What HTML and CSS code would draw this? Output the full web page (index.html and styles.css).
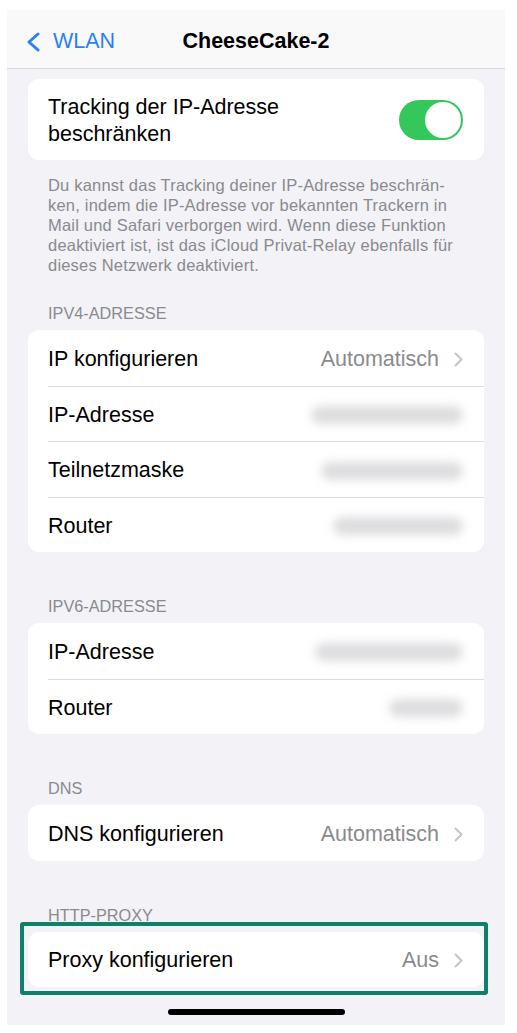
FILE: index.html
```html
<!DOCTYPE html>
<html lang="de">
<head>
    <meta charset="UTF-8">
    <meta name="viewport" content="width=device-width, initial-scale=1.0">
    <title>CheeseCake-2</title>
    <link rel="stylesheet" href="styles.css">
</head>
<body>
    <div class="screen">
        <header class="navbar">
            <a class="back" href="#">
                <svg class="back-icon" width="16" height="20" viewBox="0 0 16 20">
                    <path d="M13 2 L4 10 L13 18" fill="none" stroke="currentColor" stroke-width="3" stroke-linecap="round" stroke-linejoin="round"/>
                </svg>
                WLAN
            </a>
            <h1 class="title">CheeseCake-2</h1>
            <span></span>
        </header>

        <main class="content">
            <section class="group top">
                <div class="card">
                    <div class="row toggle-row">
                        <span class="label">Tracking der IP-Adresse<br>beschränken</span>
                        <span class="switch on"><span class="knob"></span></span>
                    </div>
                </div>
                <p class="footer">Du kannst das Tracking deiner IP-Adresse beschrän&shy;ken, indem die IP-Adresse vor bekannten Trackern in Mail und Safari verborgen wird. Wenn diese Funktion deaktiviert ist, ist das iCloud Privat-Relay ebenfalls für dieses Netzwerk deaktiviert.</p>
            </section>

            <section class="group after-footer">
                <h2 class="group-title">IPv4-Adresse</h2>
                <div class="card">
                    <div class="row">
                        <span class="label">IP konfigurieren</span>
                        <span class="value">Automatisch</span>
                        <svg class="chevron" width="9" height="15" viewBox="0 0 9 15"><path d="M1.5 1.5 L7.5 7.5 L1.5 13.5" fill="none" stroke="currentColor" stroke-width="2" stroke-linecap="round" stroke-linejoin="round"/></svg>
                    </div>
                    <div class="row">
                        <span class="label">IP-Adresse</span>
                        <span class="blur" style="width: 152px"></span>
                    </div>
                    <div class="row">
                        <span class="label">Teilnetzmaske</span>
                        <span class="blur" style="width: 142px"></span>
                    </div>
                    <div class="row">
                        <span class="label">Router</span>
                        <span class="blur" style="width: 130px"></span>
                    </div>
                </div>
            </section>

            <section class="group">
                <h2 class="group-title">IPv6-Adresse</h2>
                <div class="card">
                    <div class="row">
                        <span class="label">IP-Adresse</span>
                        <span class="blur" style="width: 148px"></span>
                    </div>
                    <div class="row">
                        <span class="label">Router</span>
                        <span class="blur" style="width: 74px"></span>
                    </div>
                </div>
            </section>

            <section class="group">
                <h2 class="group-title">DNS</h2>
                <div class="card">
                    <div class="row">
                        <span class="label">DNS konfigurieren</span>
                        <span class="value">Automatisch</span>
                        <svg class="chevron" width="9" height="15" viewBox="0 0 9 15"><path d="M1.5 1.5 L7.5 7.5 L1.5 13.5" fill="none" stroke="currentColor" stroke-width="2" stroke-linecap="round" stroke-linejoin="round"/></svg>
                    </div>
                </div>
            </section>

            <section class="group">
                <h2 class="group-title">HTTP-Proxy</h2>
                <div class="card highlight">
                    <div class="row">
                        <span class="label">Proxy konfigurieren</span>
                        <span class="value">Aus</span>
                        <svg class="chevron" width="9" height="15" viewBox="0 0 9 15"><path d="M1.5 1.5 L7.5 7.5 L1.5 13.5" fill="none" stroke="currentColor" stroke-width="2" stroke-linecap="round" stroke-linejoin="round"/></svg>
                    </div>
                </div>
            </section>
        </main>

        <div class="home-indicator"></div>
    </div>
</body>
</html>
```

FILE: styles.css
```css
body {
    margin: 0;
    padding: 0;
    background-color: #ffffff;
    font-family: "Liberation Sans", Arial, sans-serif;
    color: #000000;
}

.screen {
    position: relative;
    width: 498px;
    height: 1015px;
    margin: 10px 0 0 7px;
    background-color: #f2f2f7;
    overflow: hidden;
}

/* navigation bar */
.navbar {
    display: grid;
    grid-template-columns: 1fr auto 1fr;
    align-items: center;
    height: 59px;
    padding-top: 5px;
    box-sizing: border-box;
    background-color: #f9f9fa;
    border-bottom: 1px solid #d8d8dc;
}

.back {
    display: flex;
    align-items: center;
    gap: 12px;
    padding-left: 18px;
    color: #2b7ff4;
    text-decoration: none;
    font-size: 21.5px;
}

.title {
    margin: 0;
    font-size: 21.5px;
    font-weight: bold;
}

/* content */
.content {
    padding: 10px 21px 0;
}

.group {
    margin-top: 43px;
}

.group.top {
    margin-top: 0;
}

.group.after-footer {
    margin-top: 27px;
}

.group-title {
    margin: 0 0 8px;
    padding: 1px 20px 0;
    height: 20px;
    box-sizing: border-box;
    font-size: 16.3px;
    line-height: 20px;
    font-weight: normal;
    text-transform: uppercase;
    color: #8a8a8e;
}

.card {
    position: relative;
    background-color: #ffffff;
    border-radius: 11px;
    padding-left: 20px;
}

.row {
    display: flex;
    align-items: center;
    box-sizing: border-box;
    min-height: 55.5px;
    padding: 3px 21px 0 0;
    font-size: 21.5px;
}

.row + .row {
    border-top: 1px solid #dcdce0;
}

.label {
    flex: 1;
}

.value {
    color: #8a8a8e;
}

.chevron {
    margin-left: 15px;
    color: #c4c4c7;
}

.blur {
    height: 18px;
    border-radius: 9px;
    background-color: #d2d2d5;
    filter: blur(5px);
    opacity: 0.75;
}

.toggle-row {
    padding-top: 15px;
    padding-bottom: 12px;
    line-height: 27px;
}

.switch {
    display: flex;
    align-items: center;
    justify-content: flex-end;
    width: 64px;
    height: 40px;
    margin-top: -3px;
    padding: 0 2px;
    box-sizing: border-box;
    border-radius: 20px;
    background-color: #34c759;
}

.knob {
    width: 36px;
    height: 36px;
    border-radius: 50%;
    background-color: #ffffff;
}

.footer {
    margin: 15px 0 0;
    padding: 0 20px;
    font-size: 16.5px;
    line-height: 20px;
    letter-spacing: 0.2px;
    color: #8a8a8e;
    hyphens: manual;
}

/* highlight frame drawn over the proxy row */
.highlight::after {
    content: "";
    position: absolute;
    top: -10px;
    bottom: -8px;
    left: -8px;
    right: -4px;
    border: 4px solid #0e7f68;
    border-radius: 3px;
}

.home-indicator {
    position: absolute;
    left: 50%;
    bottom: 10px;
    width: 177px;
    height: 6px;
    margin-left: -88px;
    border-radius: 3px;
    background-color: #000000;
}
```
